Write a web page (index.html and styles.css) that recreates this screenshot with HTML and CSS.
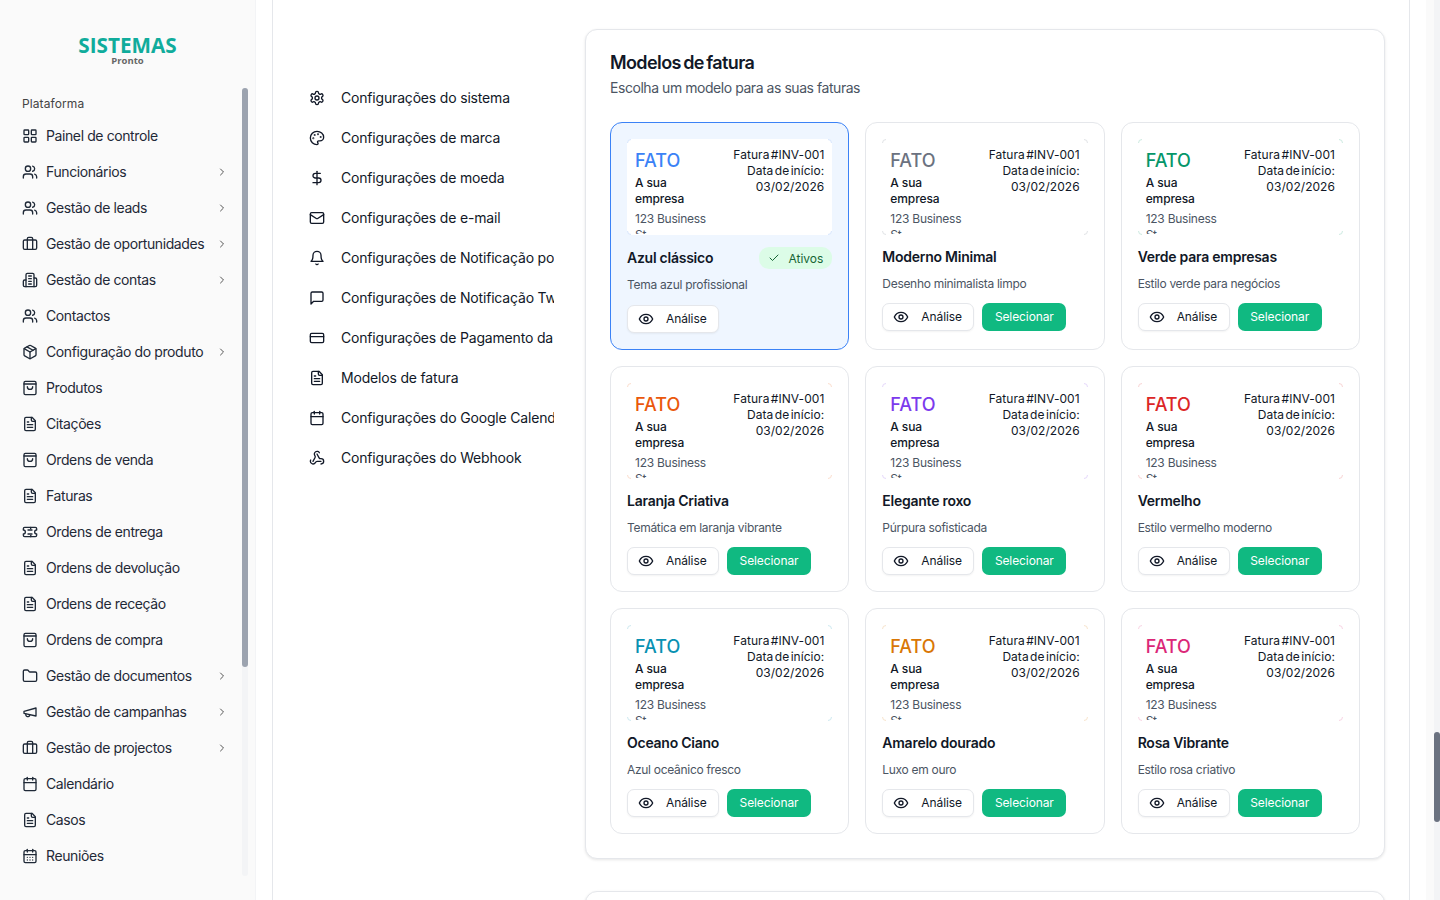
FILE: index.html
```html
<!DOCTYPE html>
<html lang="pt-PT">
<head>
    <meta charset="UTF-8">
    <meta name="viewport" content="width=device-width, initial-scale=1.0">
    <title>Modelos de fatura</title>
    <link rel="stylesheet" href="styles.css">
</head>
<body>
    <svg class="sprite" xmlns="http://www.w3.org/2000/svg">
        <symbol id="i-grid" viewBox="0 0 24 24"><rect x="3" y="3" width="7" height="7" rx="1"/><rect x="14" y="3" width="7" height="7" rx="1"/><rect x="14" y="14" width="7" height="7" rx="1"/><rect x="3" y="14" width="7" height="7" rx="1"/></symbol>
        <symbol id="i-users" viewBox="0 0 24 24"><path d="M16 21v-2a4 4 0 0 0-4-4H6a4 4 0 0 0-4 4v2"/><circle cx="9" cy="7" r="4"/><path d="M22 21v-2a4 4 0 0 0-3-3.87"/><path d="M16 3.13a4 4 0 0 1 0 7.75"/></symbol>
        <symbol id="i-briefcase" viewBox="0 0 24 24"><path d="M16 20V4a2 2 0 0 0-2-2h-4a2 2 0 0 0-2 2v16"/><rect x="2" y="6" width="20" height="14" rx="2"/></symbol>
        <symbol id="i-building" viewBox="0 0 24 24"><path d="M6 22V4a2 2 0 0 1 2-2h8a2 2 0 0 1 2 2v18Z"/><path d="M6 12H4a2 2 0 0 0-2 2v6a2 2 0 0 0 2 2h2"/><path d="M18 9h2a2 2 0 0 1 2 2v9a2 2 0 0 1-2 2h-2"/><path d="M10 6h4"/><path d="M10 10h4"/><path d="M10 14h4"/><path d="M10 18h4"/></symbol>
        <symbol id="i-package" viewBox="0 0 24 24"><path d="m7.5 4.27 9 5.15"/><path d="M21 8a2 2 0 0 0-1-1.73l-7-4a2 2 0 0 0-2 0l-7 4A2 2 0 0 0 3 8v8a2 2 0 0 0 1 1.73l7 4a2 2 0 0 0 2 0l7-4A2 2 0 0 0 21 16Z"/><path d="m3.3 7 8.7 5 8.7-5"/><path d="M12 22V12"/></symbol>
        <symbol id="i-bag" viewBox="0 0 24 24"><rect x="3" y="2" width="18" height="20" rx="2"/><path d="M3 6h18"/><path d="M16 10a4 4 0 0 1-8 0"/></symbol>
        <symbol id="i-file" viewBox="0 0 24 24"><path d="M15 2H6a2 2 0 0 0-2 2v16a2 2 0 0 0 2 2h12a2 2 0 0 0 2-2V7Z"/><path d="M14 2v4a2 2 0 0 0 2 2h4"/><path d="M10 9H8"/><path d="M16 13H8"/><path d="M16 17H8"/></symbol>
        <symbol id="i-ticket" viewBox="0 0 24 24"><path d="M2 9a3 3 0 0 1 0 6v2a2 2 0 0 0 2 2h16a2 2 0 0 0 2-2v-2a3 3 0 0 1 0-6V7a2 2 0 0 0-2-2H4a2 2 0 0 0-2 2Z"/><path d="M9 9h6"/><path d="M9 15h6"/><path d="M13 5v2"/><path d="M13 17v2"/></symbol>
        <symbol id="i-folder" viewBox="0 0 24 24"><path d="M20 20a2 2 0 0 0 2-2V8a2 2 0 0 0-2-2h-7.9a2 2 0 0 1-1.69-.9L9.6 3.9A2 2 0 0 0 7.93 3H4a2 2 0 0 0-2 2v13a2 2 0 0 0 2 2Z"/></symbol>
        <symbol id="i-megaphone" viewBox="0 0 24 24"><path d="m3 11 18-5v12L3 14v-3z"/><path d="M11.6 16.8a3 3 0 1 1-5.8-1.6"/></symbol>
        <symbol id="i-calendar" viewBox="0 0 24 24"><path d="M8 2v4"/><path d="M16 2v4"/><rect x="3" y="4" width="18" height="18" rx="2"/><path d="M3 10h18"/></symbol>
        <symbol id="i-calendar-days" viewBox="0 0 24 24"><path d="M8 2v4"/><path d="M16 2v4"/><rect x="3" y="4" width="18" height="18" rx="2"/><path d="M3 10h18"/><path d="M8 14h.01"/><path d="M12 14h.01"/><path d="M16 14h.01"/><path d="M8 18h.01"/><path d="M12 18h.01"/><path d="M16 18h.01"/></symbol>
        <symbol id="i-chevron" viewBox="0 0 24 24"><path d="m9 18 6-6-6-6"/></symbol>
        <symbol id="i-settings" viewBox="0 0 24 24"><path d="M12.22 2h-.44a2 2 0 0 0-2 2v.18a2 2 0 0 1-1 1.73l-.43.25a2 2 0 0 1-2 0l-.15-.08a2 2 0 0 0-2.73.73l-.22.38a2 2 0 0 0 .73 2.73l.15.1a2 2 0 0 1 1 1.72v.51a2 2 0 0 1-1 1.74l-.15.09a2 2 0 0 0-.73 2.73l.22.38a2 2 0 0 0 2.73.73l.15-.08a2 2 0 0 1 2 0l.43.25a2 2 0 0 1 1 1.73V20a2 2 0 0 0 2 2h.44a2 2 0 0 0 2-2v-.18a2 2 0 0 1 1-1.73l.43-.25a2 2 0 0 1 2 0l.15.08a2 2 0 0 0 2.73-.73l.22-.39a2 2 0 0 0-.73-2.73l-.15-.08a2 2 0 0 1-1-1.74v-.5a2 2 0 0 1 1-1.74l.15-.09a2 2 0 0 0 .73-2.73l-.22-.38a2 2 0 0 0-2.73-.73l-.15.08a2 2 0 0 1-2 0l-.43-.25a2 2 0 0 1-1-1.73V4a2 2 0 0 0-2-2z"/><circle cx="12" cy="12" r="3"/></symbol>
        <symbol id="i-palette" viewBox="0 0 24 24"><circle cx="13.5" cy="6.5" r=".5"/><circle cx="17.5" cy="10.5" r=".5"/><circle cx="8.5" cy="7.5" r=".5"/><circle cx="6.5" cy="12.5" r=".5"/><path d="M12 2C6.5 2 2 6.5 2 12s4.5 10 10 10c.926 0 1.648-.746 1.648-1.688 0-.437-.18-.835-.437-1.125-.29-.289-.438-.652-.438-1.125a1.64 1.64 0 0 1 1.668-1.668h1.996c3.051 0 5.555-2.503 5.555-5.554C21.965 6.012 17.461 2 12 2z"/></symbol>
        <symbol id="i-dollar" viewBox="0 0 24 24"><path d="M12 2v20"/><path d="M17 5H9.5a3.5 3.5 0 0 0 0 7h5a3.5 3.5 0 0 1 0 7H6"/></symbol>
        <symbol id="i-mail" viewBox="0 0 24 24"><rect x="2" y="4" width="20" height="16" rx="2"/><path d="m22 7-8.97 5.7a1.94 1.94 0 0 1-2.06 0L2 7"/></symbol>
        <symbol id="i-bell" viewBox="0 0 24 24"><path d="M6 8a6 6 0 0 1 12 0c0 7 3 9 3 9H3s3-2 3-9"/><path d="M10.3 21a1.94 1.94 0 0 0 3.4 0"/></symbol>
        <symbol id="i-message" viewBox="0 0 24 24"><path d="M21 15a2 2 0 0 1-2 2H7l-4 4V5a2 2 0 0 1 2-2h14a2 2 0 0 1 2 2z"/></symbol>
        <symbol id="i-card" viewBox="0 0 24 24"><rect x="2" y="5" width="20" height="14" rx="2"/><path d="M2 10h20"/></symbol>
        <symbol id="i-webhook" viewBox="0 0 24 24"><path d="M18 16.98h-5.99c-1.1 0-1.95.94-2.48 1.9A4 4 0 0 1 2 17c.01-.7.2-1.4.57-2"/><path d="m6 17 3.13-5.78c.53-.97.1-2.18-.5-3.1a4 4 0 1 1 6.89-4.06"/><path d="m12 6 3.13 5.73C15.66 12.7 16.9 13 18 13a4 4 0 0 1 0 8"/></symbol>
        <symbol id="i-eye" viewBox="0 0 24 24"><path d="M2 12s3-7 10-7 10 7 10 7-3 7-10 7-10-7-10-7Z"/><circle cx="12" cy="12" r="3"/></symbol>
        <symbol id="i-check" viewBox="0 0 24 24"><path d="M20 6 9 17l-5-5"/></symbol>
    </svg>

    <div class="layout">
        <aside class="sidebar">
            <div class="logo">
                <span class="logo-name">SISTEMAS</span>
                <span class="logo-sub">Pronto</span>
            </div>
            <div class="side-scroll">
                <div class="side-label">Plataforma</div>
                <ul class="side-menu">
                    <li><svg class="icon"><use href="#i-grid"/></svg>Painel de controle</li>
                    <li><svg class="icon"><use href="#i-users"/></svg>Funcionários<svg class="chevron"><use href="#i-chevron"/></svg></li>
                    <li><svg class="icon"><use href="#i-users"/></svg>Gestão de leads<svg class="chevron"><use href="#i-chevron"/></svg></li>
                    <li><svg class="icon"><use href="#i-briefcase"/></svg>Gestão de oportunidades<svg class="chevron"><use href="#i-chevron"/></svg></li>
                    <li><svg class="icon"><use href="#i-building"/></svg>Gestão de contas<svg class="chevron"><use href="#i-chevron"/></svg></li>
                    <li><svg class="icon"><use href="#i-users"/></svg>Contactos</li>
                    <li><svg class="icon"><use href="#i-package"/></svg>Configuração do produto<svg class="chevron"><use href="#i-chevron"/></svg></li>
                    <li><svg class="icon"><use href="#i-bag"/></svg>Produtos</li>
                    <li><svg class="icon"><use href="#i-file"/></svg>Citações</li>
                    <li><svg class="icon"><use href="#i-bag"/></svg>Ordens de venda</li>
                    <li><svg class="icon"><use href="#i-file"/></svg>Faturas</li>
                    <li><svg class="icon"><use href="#i-ticket"/></svg>Ordens de entrega</li>
                    <li><svg class="icon"><use href="#i-file"/></svg>Ordens de devolução</li>
                    <li><svg class="icon"><use href="#i-file"/></svg>Ordens de receção</li>
                    <li><svg class="icon"><use href="#i-bag"/></svg>Ordens de compra</li>
                    <li><svg class="icon"><use href="#i-folder"/></svg>Gestão de documentos<svg class="chevron"><use href="#i-chevron"/></svg></li>
                    <li><svg class="icon"><use href="#i-megaphone"/></svg>Gestão de campanhas<svg class="chevron"><use href="#i-chevron"/></svg></li>
                    <li><svg class="icon"><use href="#i-briefcase"/></svg>Gestão de projectos<svg class="chevron"><use href="#i-chevron"/></svg></li>
                    <li><svg class="icon"><use href="#i-calendar"/></svg>Calendário</li>
                    <li><svg class="icon"><use href="#i-file"/></svg>Casos</li>
                    <li><svg class="icon"><use href="#i-calendar-days"/></svg>Reuniões</li>
                </ul>
                <div class="side-track"><div class="side-thumb"></div></div>
            </div>
        </aside>

        <main class="main">
            <div class="sheet">
                <nav class="settings-nav">
                    <a><svg class="icon"><use href="#i-settings"/></svg><span>Configurações do sistema</span></a>
                    <a><svg class="icon"><use href="#i-palette"/></svg><span>Configurações de marca</span></a>
                    <a><svg class="icon"><use href="#i-dollar"/></svg><span>Configurações de moeda</span></a>
                    <a><svg class="icon"><use href="#i-mail"/></svg><span>Configurações de e-mail</span></a>
                    <a><svg class="icon"><use href="#i-bell"/></svg><span>Configurações de Notificação por e-mail</span></a>
                    <a><svg class="icon"><use href="#i-message"/></svg><span>Configurações de Notificação Twilio</span></a>
                    <a><svg class="icon"><use href="#i-card"/></svg><span>Configurações de Pagamento da fatura</span></a>
                    <a><svg class="icon"><use href="#i-file"/></svg><span>Modelos de fatura</span></a>
                    <a><svg class="icon"><use href="#i-calendar"/></svg><span>Configurações do Google Calendar</span></a>
                    <a><svg class="icon"><use href="#i-webhook"/></svg><span>Configurações do Webhook</span></a>
                </nav>

                <div class="panels">
                    <section class="panel">
                        <h2>Modelos de fatura</h2>
                        <p class="panel-sub">Escolha um modelo para as suas faturas</p>
                        <div class="template-grid">

                            <article class="template active" style="--tone:#3b82f6">
                                <div class="preview"><div class="preview-in">
                                    <div class="from"><div class="fato">FATO</div><div class="company">A sua empresa</div><div class="address">123 Business St</div></div>
                                    <div class="meta">Fatura #INV-001<br>Data de início:<br>03/02/2026</div>
                                </div></div>
                                <div class="name-row"><h3>Azul clássico</h3><span class="badge"><svg class="badge-check"><use href="#i-check"/></svg>Ativos</span></div>
                                <p class="desc">Tema azul profissional</p>
                                <div class="actions"><button class="btn-view"><svg class="eye"><use href="#i-eye"/></svg>Análise</button></div>
                            </article>

                            <article class="template" style="--tone:#6b7280">
                                <div class="preview"><div class="preview-in">
                                    <div class="from"><div class="fato">FATO</div><div class="company">A sua empresa</div><div class="address">123 Business St</div></div>
                                    <div class="meta">Fatura #INV-001<br>Data de início:<br>03/02/2026</div>
                                </div></div>
                                <div class="name-row"><h3>Moderno Minimal</h3></div>
                                <p class="desc">Desenho minimalista limpo</p>
                                <div class="actions"><button class="btn-view"><svg class="eye"><use href="#i-eye"/></svg>Análise</button><button class="btn-pick">Selecionar</button></div>
                            </article>

                            <article class="template" style="--tone:#059669">
                                <div class="preview"><div class="preview-in">
                                    <div class="from"><div class="fato">FATO</div><div class="company">A sua empresa</div><div class="address">123 Business St</div></div>
                                    <div class="meta">Fatura #INV-001<br>Data de início:<br>03/02/2026</div>
                                </div></div>
                                <div class="name-row"><h3>Verde para empresas</h3></div>
                                <p class="desc">Estilo verde para negócios</p>
                                <div class="actions"><button class="btn-view"><svg class="eye"><use href="#i-eye"/></svg>Análise</button><button class="btn-pick">Selecionar</button></div>
                            </article>

                            <article class="template" style="--tone:#ea580c">
                                <div class="preview"><div class="preview-in">
                                    <div class="from"><div class="fato">FATO</div><div class="company">A sua empresa</div><div class="address">123 Business St</div></div>
                                    <div class="meta">Fatura #INV-001<br>Data de início:<br>03/02/2026</div>
                                </div></div>
                                <div class="name-row"><h3>Laranja Criativa</h3></div>
                                <p class="desc">Temática em laranja vibrante</p>
                                <div class="actions"><button class="btn-view"><svg class="eye"><use href="#i-eye"/></svg>Análise</button><button class="btn-pick">Selecionar</button></div>
                            </article>

                            <article class="template" style="--tone:#7c3aed">
                                <div class="preview"><div class="preview-in">
                                    <div class="from"><div class="fato">FATO</div><div class="company">A sua empresa</div><div class="address">123 Business St</div></div>
                                    <div class="meta">Fatura #INV-001<br>Data de início:<br>03/02/2026</div>
                                </div></div>
                                <div class="name-row"><h3>Elegante roxo</h3></div>
                                <p class="desc">Púrpura sofisticada</p>
                                <div class="actions"><button class="btn-view"><svg class="eye"><use href="#i-eye"/></svg>Análise</button><button class="btn-pick">Selecionar</button></div>
                            </article>

                            <article class="template" style="--tone:#dc2626">
                                <div class="preview"><div class="preview-in">
                                    <div class="from"><div class="fato">FATO</div><div class="company">A sua empresa</div><div class="address">123 Business St</div></div>
                                    <div class="meta">Fatura #INV-001<br>Data de início:<br>03/02/2026</div>
                                </div></div>
                                <div class="name-row"><h3>Vermelho</h3></div>
                                <p class="desc">Estilo vermelho moderno</p>
                                <div class="actions"><button class="btn-view"><svg class="eye"><use href="#i-eye"/></svg>Análise</button><button class="btn-pick">Selecionar</button></div>
                            </article>

                            <article class="template" style="--tone:#0891b2">
                                <div class="preview"><div class="preview-in">
                                    <div class="from"><div class="fato">FATO</div><div class="company">A sua empresa</div><div class="address">123 Business St</div></div>
                                    <div class="meta">Fatura #INV-001<br>Data de início:<br>03/02/2026</div>
                                </div></div>
                                <div class="name-row"><h3>Oceano Ciano</h3></div>
                                <p class="desc">Azul oceânico fresco</p>
                                <div class="actions"><button class="btn-view"><svg class="eye"><use href="#i-eye"/></svg>Análise</button><button class="btn-pick">Selecionar</button></div>
                            </article>

                            <article class="template" style="--tone:#d97706">
                                <div class="preview"><div class="preview-in">
                                    <div class="from"><div class="fato">FATO</div><div class="company">A sua empresa</div><div class="address">123 Business St</div></div>
                                    <div class="meta">Fatura #INV-001<br>Data de início:<br>03/02/2026</div>
                                </div></div>
                                <div class="name-row"><h3>Amarelo dourado</h3></div>
                                <p class="desc">Luxo em ouro</p>
                                <div class="actions"><button class="btn-view"><svg class="eye"><use href="#i-eye"/></svg>Análise</button><button class="btn-pick">Selecionar</button></div>
                            </article>

                            <article class="template" style="--tone:#db2777">
                                <div class="preview"><div class="preview-in">
                                    <div class="from"><div class="fato">FATO</div><div class="company">A sua empresa</div><div class="address">123 Business St</div></div>
                                    <div class="meta">Fatura #INV-001<br>Data de início:<br>03/02/2026</div>
                                </div></div>
                                <div class="name-row"><h3>Rosa Vibrante</h3></div>
                                <p class="desc">Estilo rosa criativo</p>
                                <div class="actions"><button class="btn-view"><svg class="eye"><use href="#i-eye"/></svg>Análise</button><button class="btn-pick">Selecionar</button></div>
                            </article>

                        </div>
                    </section>
                    <section class="panel panel-next"></section>
                </div>
            </div>
        </main>

        <div class="page-track"><div class="page-rail"><div class="page-thumb"></div></div></div>
    </div>
</body>
</html>
```

FILE: styles.css
```css
* {
    box-sizing: border-box;
}
html, body {
    margin: 0;
    height: 100%;
    overflow: hidden;
}
body {
    font-family: Inter, "Liberation Sans", sans-serif;
    font-size: 14px;
    color: #111827;
    background-color: white;
}
.sprite {
    display: none;
}
.icon, .chevron, .eye, .badge-check {
    fill: none;
    stroke: currentColor;
    stroke-width: 2;
    stroke-linecap: round;
    stroke-linejoin: round;
    flex-shrink: 0;
}
.icon {
    width: 16px;
    height: 16px;
    margin-top: 2px;
}
.layout {
    display: flex;
    height: 900px;
}

/* sidebar */
.sidebar {
    width: 256px;
    flex-shrink: 0;
    background-color: #fafafa;
    border-right: 1px solid #f3f4f6;
}
.logo {
    height: 88px;
    padding-top: 34px;
    display: flex;
    flex-direction: column;
    align-items: center;
}
.logo-name {
    font-family: "Open Sans", sans-serif;
    font-weight: 700;
    font-size: 20.7px;
    line-height: 22px;
    color: #10ac9c;
}
.logo-sub {
    font-family: "Open Sans", sans-serif;
    font-weight: 700;
    font-size: 9.5px;
    line-height: 10px;
    color: #666;
}
.side-scroll {
    position: relative;
    padding-left: 22px;
    height: 788px;
}
.side-label {
    font-size: 12px;
    line-height: 16px;
    padding-top: 8px;
    height: 30px;
    color: #444;
    letter-spacing: 0.1px;
}
.side-menu {
    list-style: none;
    margin: 0;
    padding: 0;
    width: 206px;
}
.side-menu li {
    height: 36px;
    padding-bottom: 2px;
    display: flex;
    align-items: center;
    gap: 8px;
    color: #1f2937;
    letter-spacing: -0.4px;
    white-space: nowrap;
}
.chevron {
    width: 12px;
    height: 12px;
    margin-top: 2px;
    margin-left: auto;
    color: #555;
}
.side-track {
    position: absolute;
    left: 242px;
    top: 0;
    width: 6px;
    height: 788px;
    background-color: #f3f4f6;
    border-radius: 3px;
}
.side-thumb {
    height: 579px;
    background-color: #9ca3af;
    border-radius: 3px;
}

/* main column */
.main {
    flex: 1;
    padding-left: 16px;
    padding-right: 16px;
    min-width: 0;
}
.sheet {
    height: 100%;
    display: flex;
    border-left: 1px solid #e5e7eb;
    border-right: 1px solid #e5e7eb;
    padding-left: 36px;
    padding-top: 29px;
}
.settings-nav {
    width: 245px;
    margin-top: 49px;
    flex-shrink: 0;
    overflow: hidden;
}
.settings-nav a {
    display: flex;
    align-items: center;
    gap: 16px;
    height: 40px;
    padding-bottom: 2px;
    color: #111827;
    letter-spacing: -0.18px;
    white-space: nowrap;
}
.panels {
    width: 800px;
    margin-left: 31px;
    display: flex;
    flex-direction: column;
    gap: 32px;
}
.panel {
    border: 1px solid #e5e7eb;
    border-radius: 12px;
    background-color: white;
    padding: 24px;
    box-shadow: 0 1px 3px rgba(0,0,0,0.1);
}
.panel h2 {
    margin: 0;
    font-size: 18px;
    line-height: 18px;
    font-weight: 600;
    letter-spacing: -0.6px;
    word-spacing: -1.6px;
}
.panel-sub {
    margin: 6px 0 0;
    font-size: 14px;
    line-height: 20px;
    color: #4b5563;
    letter-spacing: -0.45px;
}
.template-grid {
    display: grid;
    grid-template-columns: repeat(3, 1fr);
    gap: 16px;
    margin-top: 24px;
}
.panel-next {
    height: 100px;
    flex-shrink: 0;
}

/* template cards */
.template {
    border: 1px solid #e5e7eb;
    border-radius: 12px;
    padding: 16px;
    background-color: white;
}
.template.active {
    border-color: #3b82f6;
    background-color: #eff6ff;
}
.preview {
    position: relative;
    height: 96px;
    background-color: white;
    border: 1px solid color-mix(in srgb, var(--tone) 20%, white);
    border-radius: 4px;
}
.preview::before, .preview::after {
    content: "";
    position: absolute;
    background-color: white;
}
.preview::before {
    left: 3px;
    right: 3px;
    top: -1px;
    bottom: -1px;
}
.preview::after {
    left: -1px;
    right: -1px;
    top: 3px;
    bottom: 3px;
}
.preview-in {
    position: relative;
    z-index: 1;
    height: 100%;
    overflow: hidden;
    display: flex;
    justify-content: space-between;
    padding: 7px 7px 0;
    font-size: 12px;
    line-height: 16px;
}
.from {
    width: 76px;
}
.fato {
    font-size: 18px;
    line-height: 28px;
    font-weight: 500;
    color: var(--tone);
}
.company {
    font-weight: 500;
    letter-spacing: -0.1px;
    color: #111827;
}
.address {
    margin-top: 4px;
    color: #4b5563;
    letter-spacing: -0.25px;
}
.meta {
    text-align: right;
    color: #111827;
    letter-spacing: 0.05px;
    word-spacing: -2px;
}
.name-row {
    display: flex;
    align-items: center;
    justify-content: space-between;
    min-height: 22px;
    margin-top: 11px;
}
.template.active .name-row {
    margin-top: 12px;
}
.name-row h3 {
    margin: 0;
    font-size: 14px;
    line-height: 20px;
    font-weight: 600;
    letter-spacing: -0.25px;
}
.badge {
    display: flex;
    align-items: center;
    gap: 8px;
    height: 22px;
    padding: 0 9px;
    border-radius: 10px;
    font-size: 12px;
    color: #166534;
    background-color: #dcfce7;
}
.badge-check {
    width: 12px;
    height: 12px;
}
.desc {
    margin: 6px 0 0;
    font-size: 12px;
    line-height: 19px;
    color: #4b5563;
    letter-spacing: -0.3px;
}
.actions {
    display: flex;
    gap: 8px;
    margin-top: 10px;
}
.template.active .actions {
    margin-top: 11px;
}
button {
    font-family: inherit;
    font-size: 12px;
    height: 28px;
    border-radius: 7px;
    padding: 0 0 2px;
    letter-spacing: -0.1px;
}
.btn-view {
    width: 92px;
    display: flex;
    align-items: center;
    gap: 12px;
    padding-left: 10px;
    color: #111827;
    background-color: white;
    border: 1px solid #e5e7eb;
    box-shadow: 0 1px 2px rgba(0,0,0,0.05);
}
.eye {
    width: 16px;
    height: 16px;
    margin-top: 2px;
}
.btn-pick {
    width: 84px;
    color: white;
    background-color: #10b981;
    border: none;
}

/* window scrollbar */
.page-track {
    width: 14px;
    flex-shrink: 0;
    background-color: #fafafa;
    display: flex;
    justify-content: flex-end;
}
.page-rail {
    width: 6px;
    height: 100%;
    padding-top: 732px;
    background-color: #f3f4f6;
}
.page-thumb {
    height: 90px;
    background-color: #6b7280;
    border-radius: 3px;
}
```
